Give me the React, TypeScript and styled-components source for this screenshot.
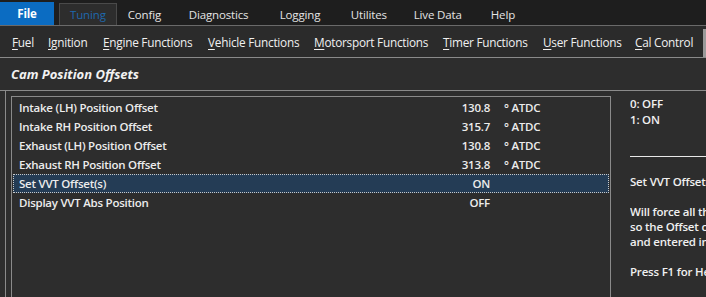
import React from "react";
import styled, { createGlobalStyle } from "styled-components";

const Global = createGlobalStyle`
  html, body { margin: 0; padding: 0; background: #2d2d2d; }
  body { font-family: "Open Sans", "Noto Sans", sans-serif; overflow: hidden; }
  #root { width: 706px; height: 297px; overflow: hidden; }
`;

const Page = styled.div`
  width: 706px;
  height: 297px;
  display: flex;
  flex-direction: column;
  background: #2d2d2d;
  color: #ececec;
`;

const TopBar = styled.div`
  height: 26px;
  box-sizing: border-box;
  display: flex;
  align-items: flex-end;
  background: #1e1e1e;
  border-bottom: 1px solid #6a6a6a;
  font-size: 11.5px;
  letter-spacing: -0.15px;
`;

const TopTab = styled.div<{ $variant?: "file" | "active" }>`
  height: ${(p) => (p.$variant === "file" ? "23px" : "22px")};
  box-sizing: border-box;
  display: flex;
  align-items: center;
  justify-content: center;
  width: ${(p) => (p.$variant === "file" ? "54px" : "auto")};
  padding: ${(p) => (p.$variant === "active" ? "0 10px" : "0")};
  margin-left: ${(p) => (p.$variant === "active" ? "5px" : "0")};
  margin-right: ${(p) => (p.$variant === "active" ? "11px" : "0")};
  background: ${(p) => (p.$variant === "file" ? "#0b6cc2" : p.$variant === "active" ? "#2d2d2d" : "transparent")};
  border: ${(p) => (p.$variant === "active" ? "1px solid #4a4a4a" : "none")};
  border-bottom: none;
  color: ${(p) => (p.$variant === "file" ? "#ffffff" : p.$variant === "active" ? "#1e68ae" : "#e4e4e4")};
  font-weight: ${(p) => (p.$variant === "file" ? 700 : 400)};
`;

const TopItem = styled.div<{ $w: number }>`
  width: ${(p) => p.$w}px;
  height: 22px;
  display: flex;
  align-items: center;
  color: #e4e4e4;
`;

const SubBar = styled.div`
  height: 32px;
  box-sizing: border-box;
  display: flex;
  align-items: center;
  padding-left: 12px;
  background: #2b2b2b;
  border-bottom: 1px solid #8a8a8a;
  font-size: 11.8px;
  letter-spacing: -0.25px;
`;

const SubItem = styled.div<{ $w: number }>`
  width: ${(p) => p.$w}px;
  flex: none;
  color: #f0f0f0;
  white-space: nowrap;
  u { text-decoration: underline; text-underline-offset: 2px; }
`;

const EdgeBar = styled.div`
  margin-left: auto;
  width: 3px;
  height: 28px;
  align-self: flex-end;
  background: #9a9a9a;
`;

const TitleRow = styled.div`
  height: 33px;
  box-sizing: border-box;
  display: flex;
  align-items: center;
  padding-left: 11px;
  font-size: 13px;
  font-weight: 700;
  font-style: italic;
  color: #f2f2f2;
  border-bottom: 1px solid #8a8a8a;
`;

const Body = styled.div`
  flex: 1;
  display: flex;
  min-height: 0;
`;

const Group = styled.div`
  margin-left: 5px;
  border-left: 1px solid #8a8a8a;
  padding: 5px 0 0 5px;
  display: flex;
`;

const ListBox = styled.div`
  width: 600px;
  box-sizing: border-box;
  border: 1px solid #8a8a8a;
  border-bottom: none;
  padding: 1px 1px 0 1px;
  display: flex;
  flex-direction: column;
`;

const Row = styled.div<{ $selected?: boolean }>`
  height: 19px;
  box-sizing: border-box;
  display: grid;
  grid-template-columns: 414px 57px 80px;
  align-items: center;
  padding-left: 5px;
  font-size: 11.5px;
  font-weight: 600;
  letter-spacing: -0.25px;
  color: #ececec;
  background: ${(p) => (p.$selected ? "#243c55" : "transparent")};
  border: 1px dotted ${(p) => (p.$selected ? "#c8c8c8" : "transparent")};
`;

const Label = styled.span`
  white-space: nowrap;
`;

const Value = styled.span`
  text-align: right;
`;

const Unit = styled.span`
  padding-left: 14px;
  white-space: nowrap;
`;

const Info = styled.div`
  flex: 1;
  min-width: 0;
  padding: 5px 0 0 19px;
  display: flex;
  flex-direction: column;
  font-size: 11.5px;
  font-weight: 600;
  letter-spacing: -0.2px;
  color: #f0f0f0;
  white-space: nowrap;
  overflow: hidden;
`;

const InfoLine = styled.div<{ $gap?: number; $h?: number }>`
  height: ${(p) => p.$h ?? 15}px;
  line-height: ${(p) => p.$h ?? 15}px;
  margin-top: ${(p) => p.$gap ?? 0}px;
  overflow: hidden;
`;

const Rule = styled.div`
  margin-top: 28px;
  height: 1px;
  background: #e8e8e8;
`;

const rows = [
  { label: "Intake (LH) Position Offset", value: "130.8", unit: "° ATDC" },
  { label: "Intake RH Position Offset", value: "315.7", unit: "° ATDC" },
  { label: "Exhaust (LH) Position Offset", value: "130.8", unit: "° ATDC" },
  { label: "Exhaust RH Position Offset", value: "313.8", unit: "° ATDC" },
  { label: "Set VVT Offset(s)", value: "ON", unit: "", selected: true },
  { label: "Display VVT Abs Position", value: "OFF", unit: "" },
];

const subItems: { k: string; rest: string; w: number }[] = [
  { k: "F", rest: "uel", w: 36 },
  { k: "I", rest: "gnition", w: 55 },
  { k: "E", rest: "ngine Functions", w: 105 },
  { k: "V", rest: "ehicle Functions", w: 106 },
  { k: "M", rest: "otorsport Functions", w: 129 },
  { k: "T", rest: "imer Functions", w: 100 },
  { k: "U", rest: "ser Functions", w: 92 },
  { k: "C", rest: "al Control", w: 62 },
];

const topItems = [
  { t: "Config", w: 61 },
  { t: "Diagnostics", w: 91 },
  { t: "Logging", w: 71 },
  { t: "Utilites", w: 63 },
  { t: "Live Data", w: 77 },
  { t: "Help", w: 40 },
];

export default function App() {
  return (
    <>
      <Global />
      <Page>
        <TopBar>
          <TopTab $variant="file">File</TopTab>
          <TopTab $variant="active">Tuning</TopTab>
          {topItems.map((i) => (
            <TopItem key={i.t} $w={i.w}>{i.t}</TopItem>
          ))}
        </TopBar>
        <SubBar>
          {subItems.map((s) => (
            <SubItem key={s.k + s.rest} $w={s.w}>
              <u>{s.k}</u>
              {s.rest}
            </SubItem>
          ))}
          <EdgeBar />
        </SubBar>
        <TitleRow>Cam Position Offsets</TitleRow>
        <Body>
          <Group>
            <ListBox>
              {rows.map((r) => (
                <Row key={r.label} $selected={r.selected}>
                  <Label>{r.label}</Label>
                  <Value>{r.value}</Value>
                  <Unit>{r.unit}</Unit>
                </Row>
              ))}
            </ListBox>
          </Group>
          <Info>
            <InfoLine $h={16}>0: OFF</InfoLine>
            <InfoLine $h={16}>1: ON</InfoLine>
            <Rule />
            <InfoLine $gap={17}>Set VVT Offset(s)</InfoLine>
            <InfoLine $gap={15}>Will force all the values to zero</InfoLine>
            <InfoLine>so the Offset can be measured</InfoLine>
            <InfoLine>and entered in the table</InfoLine>
            <InfoLine $gap={15}>Press F1 for Help</InfoLine>
          </Info>
        </Body>
      </Page>
    </>
  );
}
